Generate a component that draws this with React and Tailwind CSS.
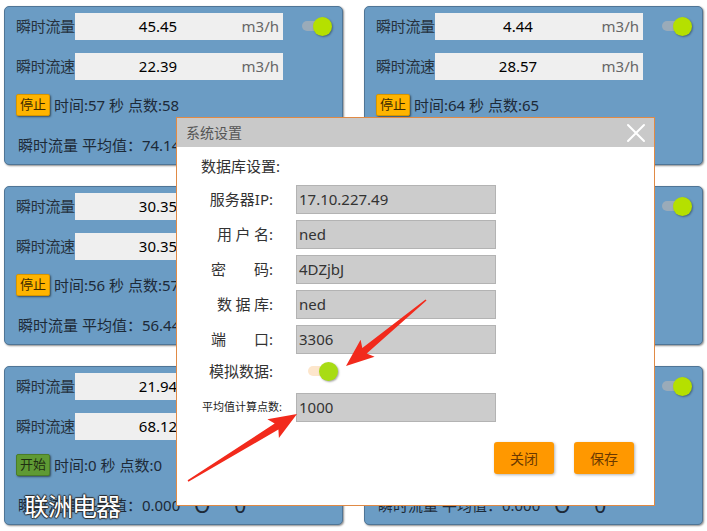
import React from "react";

const FONT = { fontFamily: '"Noto Sans", "Noto Sans CJK SC", sans-serif' };

function Toggle({ track = "bg-[#9aabb9]", knob = "bg-[#b5e000]" }) {
  return (
    <div className="relative w-[30px] h-[19px] shrink-0">
      <div className={`absolute left-0 top-[4px] w-[20px] h-[10px] rounded-full ${track}`} />
      <div className={`absolute right-0 top-0 w-[19px] h-[19px] rounded-full ${knob} shadow-[1px_1px_2px_rgba(0,0,0,0.35)]`} />
    </div>
  );
}

function Field({ label, value }) {
  return (
    <div className="flex items-center h-[27px]">
      <span className="w-[59px] text-[15px] text-[#26323e] whitespace-nowrap leading-none tracking-[-0.3px]">{label}</span>
      <div className="flex items-center w-[208px] h-[27px] bg-[#efefef]">
        <span className="w-[166px] text-center text-[15px] text-black">{value}</span>
        <span className="flex-1 text-right pr-[4px] text-[15px] text-[#666]">m3/h</span>
      </div>
    </div>
  );
}

function Panel({ v1, v2, running, t, n, avg, zeros }) {
  return (
    <div className="h-[159px] rounded-[5px] border border-[#4f7596] bg-[#6b9cc4] shadow-[1px_1px_2px_rgba(0,0,0,0.45)] pl-[11px] pt-[6px] flex flex-col">
      <div className="flex items-center">
        <Field label="瞬时流量" value={v1} />
        <div className="ml-[19px]">
          <Toggle />
        </div>
      </div>
      <div className="mt-[13px]">
        <Field label="瞬时流速" value={v2} />
      </div>
      <div className="mt-[14px] flex items-center h-[22px]">
        <div
          className={`w-[34px] h-[22px] flex items-center justify-center text-[13px] rounded-[2px] shadow-[1px_1px_2px_rgba(0,0,0,0.5)] ${
            running ? "bg-[#ffb400] border border-[#d69600] text-[#3a2a00]" : "bg-[#5f9a34] border border-[#4a7d28] text-[#1f2f12]"
          }`}
        >
          {running ? "停止" : "开始"}
        </div>
        <span className="ml-[4px] text-[15px] text-[#1d2a38] whitespace-pre">{`时间:${t} 秒 点数:${n}`}</span>
      </div>
      <div className="mt-[19px] flex items-center h-[20px] pl-[2px] text-[15px] text-[#1d2a38] whitespace-pre">
        <span>瞬时流量 平均值：</span>
        <span className="w-[44px]">{avg}</span>
        {zeros ? (
          <>
            <span className="ml-[8px] text-[21px] leading-none">O</span>
            <span className="ml-[24px] text-[21px] leading-none">0</span>
          </>
        ) : null}
      </div>
    </div>
  );
}

function arrowPoints(tx, ty, px, py) {
  const dx = px - tx;
  const dy = py - ty;
  const L = Math.hypot(dx, dy);
  const ux = dx / L;
  const uy = dy / L;
  const nx = -uy;
  const ny = ux;
  const head = 24;
  const bx = px - ux * head;
  const by = py - uy * head;
  const pts = [
    [tx + nx * 0.8, ty + ny * 0.8],
    [bx + nx * 3.5, by + ny * 3.5],
    [bx - ux * 4 + nx * 11, by - uy * 4 + ny * 11],
    [px, py],
    [bx - ux * 4 - nx * 11, by - uy * 4 - ny * 11],
    [bx - nx * 3.5, by - ny * 3.5],
    [tx - nx * 0.8, ty - ny * 0.8],
  ];
  return pts.map((p) => p.map((v) => v.toFixed(1)).join(",")).join(" ");
}

function Label({ children, spread }) {
  if (spread) {
    return (
      <div className="flex justify-between text-[15px] text-[#333]" style={{ width: spread }}>
        {children}
      </div>
    );
  }
  return <div className="text-[15px] text-[#333] whitespace-pre">{children}</div>;
}

function Row({ label, value }) {
  return (
    <div className="flex items-center h-[29px]">
      <div className="w-[95px] flex justify-end pr-[23px]">{label}</div>
      <div className="w-[200px] h-[29px] bg-[#cccccc] border border-[#b3b3b3] flex items-center pl-[2px] text-[15px] text-[#333]">
        {value}
      </div>
    </div>
  );
}

export default function App() {
  return (
    <div className="relative w-[707px] h-[531px] bg-white overflow-hidden" style={FONT}>
      <div className="grid grid-cols-[339px_339px] gap-x-[21px] gap-y-[21px] pl-[4px] pt-[6px]">
        <Panel v1="45.45" v2="22.39" running t="57" n="58" avg="74.14" />
        <Panel v1="4.44" v2="28.57" running t="64" n="65" avg="62.31" />
        <Panel v1="30.35" v2="30.35" running t="56" n="57" avg="56.44" />
        <Panel v1="30.35" v2="30.35" running t="56" n="57" avg="56.44" />
        <Panel v1="21.94" v2="68.12" running={false} t="0" n="0" avg="0.000" zeros />
        <Panel v1="21.94" v2="68.12" running={false} t="0" n="0" avg="0.000" zeros />
      </div>

      {/* watermark */}
      <div className="absolute left-[24px] top-[494px] text-[25px] leading-none text-white tracking-[-1px] [text-shadow:1px_0_1px_#2a2a2a,-1px_0_1px_#2a2a2a,0_1px_1px_#2a2a2a,0_-1px_1px_#2a2a2a]">
        联洲电器
      </div>

      {/* dialog */}
      <div className="absolute left-[176px] top-[117px] w-[479px] h-[389px] bg-white border border-[#e08a45] flex flex-col">
        <div className="h-[29px] bg-[#c9c9c9] flex items-center justify-between pl-[9px] pr-[8px]">
          <span className="text-[14px] text-[#555]">系统设置</span>
          <svg width="20" height="20" viewBox="0 0 20 20">
            <path d="M2 2 L18 18 M18 2 L2 18" stroke="white" strokeWidth="2" strokeLinecap="round" />
          </svg>
        </div>
        <div className="flex flex-col pl-[24px] pt-[9px]">
          <div className="h-[20px] flex items-center text-[15px] text-[#333]">数据库设置:</div>
          <div className="mt-[9px] flex flex-col gap-[6px]">
            <Row label={<Label>服务器IP:</Label>} value="17.10.227.49" />
            <Row
              label={
                <Label spread={56}>
                  <span>用</span>
                  <span>户</span>
                  <span>名:</span>
                </Label>
              }
              value="ned"
            />
            <Row
              label={
                <Label spread={62}>
                  <span>密</span>
                  <span>码:</span>
                </Label>
              }
              value="4DZjbJ"
            />
            <Row
              label={
                <Label spread={56}>
                  <span>数</span>
                  <span>据</span>
                  <span>库:</span>
                </Label>
              }
              value="ned"
            />
            <Row
              label={
                <Label spread={62}>
                  <span>端</span>
                  <span>口:</span>
                </Label>
              }
              value="3306"
            />
          </div>
          <div className="mt-[6px] flex items-center h-[22px]">
            <div className="w-[95px] flex justify-end pr-[23px]">
              <Label>模拟数据:</Label>
            </div>
            <div className="ml-[12px]">
              <Toggle track="bg-[#fde6cc]" knob="bg-[#a8dc14]" />
            </div>
          </div>
          <div className="mt-[11px] flex items-center h-[29px]">
            <div className="w-[95px] flex justify-end pr-[14px] text-[11px] text-[#222] whitespace-nowrap">平均值计算点数:</div>
            <div className="w-[200px] h-[29px] bg-[#cccccc] border border-[#b3b3b3] flex items-center pl-[2px] text-[15px] text-[#333]">
              1000
            </div>
          </div>
        </div>
        <div className="mt-[20px] flex justify-end gap-[20px] pr-[20px]">
          <div className="w-[60px] h-[32px] rounded-[3px] bg-[#ff9800] shadow-[1px_1px_3px_rgba(0,0,0,0.3)] flex items-center justify-center text-[14px] text-[#6a3800]">
            关闭
          </div>
          <div className="w-[60px] h-[32px] rounded-[3px] bg-[#ff9800] shadow-[1px_1px_3px_rgba(0,0,0,0.3)] flex items-center justify-center text-[14px] text-[#6a3800]">
            保存
          </div>
        </div>
      </div>

      {/* arrows */}
      <svg className="absolute left-0 top-0 pointer-events-none" width="707" height="531">
        <polygon points={arrowPoints(426, 300, 346, 366)} fill="#f22a1c" />
        <polygon points={arrowPoints(188, 481, 297, 414)} fill="#f22a1c" />
      </svg>
    </div>
  );
}
